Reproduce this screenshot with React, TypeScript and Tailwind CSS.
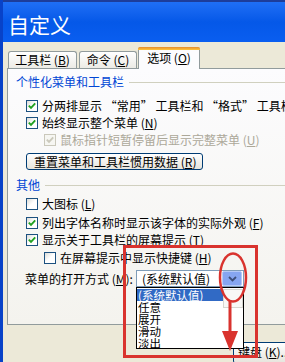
import React from "react";

const FONT = { fontFamily: '"Noto Sans CJK SC", "Noto Sans", sans-serif' };

function Check({ checked, disabled }: { checked?: boolean; disabled?: boolean }) {
  return (
    <div
      className={
        "w-[12px] h-[12px] shrink-0 border flex items-center justify-center " +
        (disabled ? "border-[#cac8bb] bg-[#f6f6f2]" : "border-[#1c5180] bg-gradient-to-br from-[#dcdcd7] via-white to-white")
      }
    >
      {checked && (
        <svg width="8" height="8" viewBox="0 0 8 8">
          <path
            d="M0.8 3.6 L3 5.8 L7.2 1.4"
            fill="none"
            stroke={disabled ? "#cac8bb" : "#21a121"}
            strokeWidth="1.9"
          />
        </svg>
      )}
    </div>
  );
}

function Row({
  checked,
  disabled,
  indent,
  mt,
  children,
}: {
  checked?: boolean;
  disabled?: boolean;
  indent?: boolean;
  mt: string;
  children: React.ReactNode;
}) {
  return (
    <div className={"flex items-center h-[13px] whitespace-nowrap " + mt + (indent ? " pl-[36px]" : " pl-[18px]")}>
      <Check checked={checked} disabled={disabled} />
      <span className={"ml-[4px] text-[12px] leading-[13px] " + (disabled ? "text-[#aca899]" : "text-black")}>
        {children}
      </span>
    </div>
  );
}

function Group({ title, mt }: { title: string; mt: string }) {
  return (
    <div className={"flex items-center h-[16px] pl-[8px] " + mt}>
      <span className="text-[12px] leading-[16px] text-[#0046d5] whitespace-nowrap">{title}</span>
      <div className="flex-1 h-px bg-[#d0d0bf] ml-[5px]" />
    </div>
  );
}

export default function App() {
  return (
    <div
      className="relative w-[285px] h-[362px] overflow-hidden bg-[#ece9d8] border-l-[3px] border-[#0842c8]"
      style={FONT}
    >
      {/* Title bar */}
      <div className="h-[42px] flex items-center pl-[5px] bg-gradient-to-b from-[#1f6ff5] via-[#0558e8] to-[#0a5ef0] border-t-[2px] border-[#1d3d9a]">
        <span className="text-white text-[21px] leading-[24px] pt-[4px]">自定义</span>
      </div>

      {/* Body */}
      <div className="pt-[5px] pl-[4px]">
        {/* Tabs */}
        <div className="flex items-end h-[21px] pl-[1px] relative z-10">
          <div className="w-[69px] h-[17px] border border-b-0 border-[#919b9c] rounded-t-[3px] bg-gradient-to-b from-white to-[#ecebe5] flex items-center justify-center text-[12px] leading-[14px] whitespace-nowrap">
            工具栏 (<u>B</u>)
          </div>
          <div className="ml-[2px] w-[58px] h-[17px] border border-b-0 border-[#919b9c] rounded-t-[3px] bg-gradient-to-b from-white to-[#ecebe5] flex items-center justify-center text-[12px] leading-[14px] whitespace-nowrap">
            命令 (<u>C</u>)
          </div>
          <div className="ml-[1px] w-[62px] h-[22px] -mb-px border border-b-0 border-[#919b9c] rounded-t-[3px] bg-[#fcfcfe] flex flex-col">
            <div className="h-[3px] rounded-t-[2px] bg-gradient-to-b from-[#e68b2c] to-[#ffc73c] -mx-px -mt-px" />
            <div className="flex-1 flex items-center justify-center text-[12px] leading-[14px] whitespace-nowrap pb-[3px]">
              选项 (<u>O</u>)
            </div>
          </div>
        </div>

        {/* Panel */}
        <div className="w-[300px] h-[257px] border border-[#919b9c] bg-gradient-to-b from-[#fcfcfe] to-[#f4f3ee] flex flex-col">
          <Group title="个性化菜单和工具栏" mt="mt-[5px]" />
          <Row checked mt="mt-[9px]">分两排显示 “常用” 工具栏和 “格式” 工具栏</Row>
          <Row checked mt="mt-[4px]">
            始终显示整个菜单 (<u>N</u>)
          </Row>
          <Row checked disabled indent mt="mt-[4px]">
            鼠标指针短暂停留后显示完整菜单 (<u>U</u>)
          </Row>
          <div className="mt-[7px] ml-[18px] w-[177px] h-[17px] border border-[#003c74] rounded-[3px] bg-gradient-to-b from-white to-[#e6e4dc] flex items-center pl-[7px] text-[12px] leading-[14px] whitespace-nowrap">
            重置菜单和工具栏惯用数据 (<u>R</u>)
          </div>
          <Group title="其他" mt="mt-[7px]" />
          <Row mt="mt-[4px]">
            大图标 (<u>L</u>)
          </Row>
          <Row checked mt="mt-[6px]">
            列出字体名称时显示该字体的实际外观 (<u>F</u>)
          </Row>
          <Row checked mt="mt-[4px]">
            显示关于工具栏的屏幕提示 (<u>T</u>)
          </Row>
          <Row indent mt="mt-[5px]">
            在屏幕提示中显示快捷键 (<u>H</u>)
          </Row>
          <div className="mt-[6px] flex items-center h-[17px] pl-[17px] whitespace-nowrap">
            <span className="text-[12px] leading-[14px] w-[111px]">
              菜单的打开方式 (<u>M</u>):
            </span>
            <div className="w-[108px] h-[17px] border border-[#7f9db9] bg-white flex items-center">
              <span className="pl-[5px] text-[12px] leading-[14px] flex-1">(系统默认值)</span>
              <div className="w-[20px] h-[15px] mr-px bg-[#86a6f1] border border-[#b5c9f7] rounded-[2px] flex items-center justify-center">
                <svg width="9" height="6" viewBox="0 0 9 6">
                  <path d="M1 1 L4.5 4.5 L8 1" fill="none" stroke="#3d4f7a" strokeWidth="1.8" />
                </svg>
              </div>
            </div>
          </div>
        </div>

        {/* bottom button */}
        <div className="mt-[17px] ml-[226px] w-[80px] h-[22px] border border-[#003c74] rounded-[3px] bg-gradient-to-b from-white to-[#e6e4dc] flex items-start pt-[2px] pl-[4px] text-[12px] leading-[14px] whitespace-nowrap">
          键盘 (<u>K</u>)...
        </div>
      </div>

      {/* Dropdown list (overlay) */}
      <div className="absolute left-[133px] top-[287px] w-[108px] h-[62px] border border-black bg-white z-20 flex flex-col pt-px">
        <div className="h-[12px] w-[86px] bg-[#316ac5] text-white text-[11.5px] leading-[12px] pl-[1px] whitespace-nowrap">
          (系统默认值)
        </div>
        <div className="h-[12px] text-[11.5px] leading-[12px] pl-[1px]">任意</div>
        <div className="h-[12px] text-[11.5px] leading-[12px] pl-[1px]">展开</div>
        <div className="h-[12px] text-[11.5px] leading-[12px] pl-[1px]">滑动</div>
        <div className="h-[12px] text-[11.5px] leading-[12px] pl-[1px]">淡出</div>
        <div className="absolute left-[86px] top-[1px] w-[20px] h-[19px] border border-[#d6d6d0] bg-[#f8f8f6]" />
      </div>

      {/* Red annotations */}
      <svg className="absolute left-[-3px] top-0 z-30 pointer-events-none" width="285" height="362" viewBox="0 0 285 362">
        <rect x="124.5" y="246.5" width="132" height="110" fill="none" stroke="#d9332e" strokeWidth="3" />
        <ellipse cx="233" cy="277.5" rx="13" ry="24" fill="none" stroke="#d9332e" strokeWidth="2.5" />
        <line x1="230" y1="300" x2="230" y2="334" stroke="#d9332e" strokeWidth="3" />
        <polygon points="222,331 238,331 230,351" fill="#d9332e" />
      </svg>
    </div>
  );
}
